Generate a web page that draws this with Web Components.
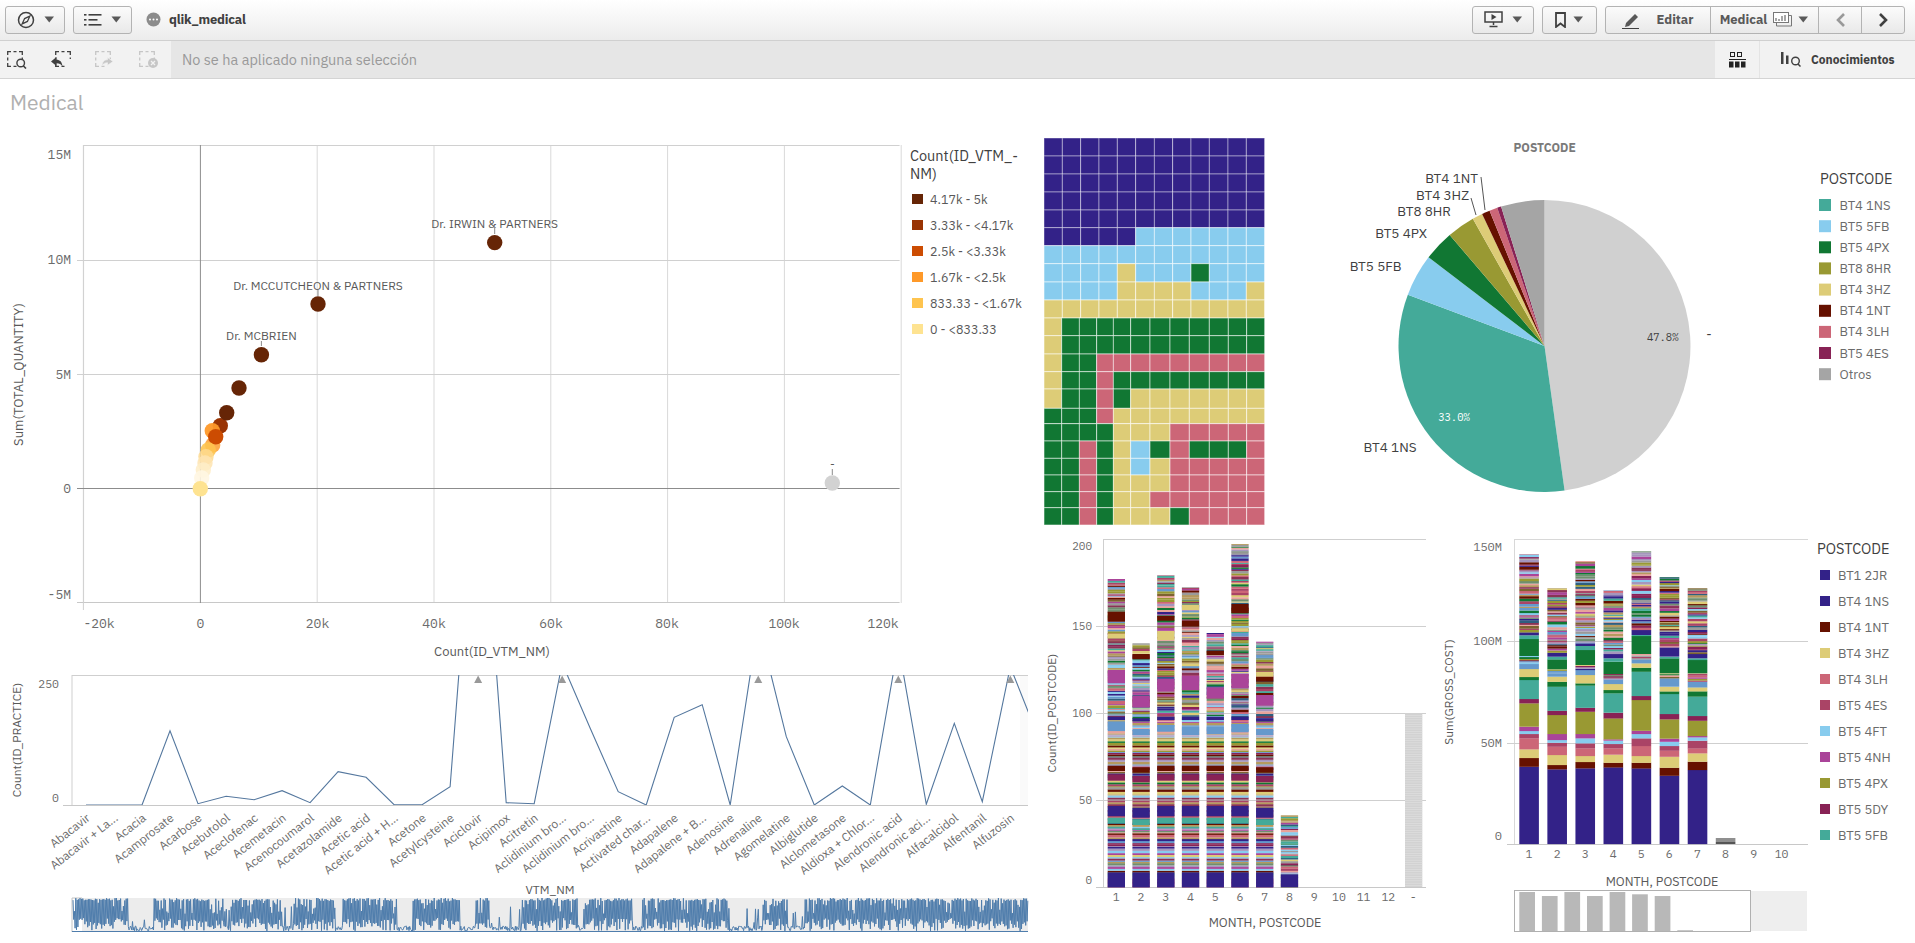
<!DOCTYPE html>
<html lang="es"><head><meta charset="utf-8"><title>Medical</title>
<style>
html,body{margin:0;padding:0;background:#fff;width:1915px;height:943px;overflow:hidden;font-family:"Noto Sans","Liberation Sans",sans-serif}
q-app{display:block;width:1915px;height:943px}
</style></head><body>
<q-app></q-app>
<script>
const C={navy:'#332288',blue:'#6699cc',light:'#88ccee',teal:'#44aa99',green:'#117733',olive:'#999933',khaki:'#ddcc77',dark:'#661100',pink:'#cc6677',crim:'#aa4466',mar:'#882255',mag:'#aa4499'};
const FONT='"IBM Plex Sans","Noto Sans","Liberation Sans",sans-serif';
const NUMCSS=`.n{font-family:"IBM Plex Mono","DejaVu Sans Mono","Liberation Mono",monospace;font-size:11.5px;fill:#6b6b6b}`;
const BASECSS=`:host{display:block}svg{display:block;overflow:visible}text{font-family:${FONT};font-size:13px;fill:#595959;dominant-baseline:central}.t{font-size:13px;fill:#595959}.l{font-size:14.5px;fill:#404040}.i{font-size:13px;fill:#666}${NUMCSS}`;
function rng(seed){let s=seed>>>0;return()=>{s=(s+0x6D2B79F5)>>>0;let t=s;t=Math.imul(t^t>>>15,t|1);t^=t+Math.imul(t^t>>>7,t|61);return((t^t>>>14)>>>0)/4294967296}}
const R=(x,y,w,h,f,e='')=>`<rect x="${x}" y="${y}" width="${w}" height="${h}" fill="${f}" ${e}/>`;
const L=(a,b,c,d,s,w=1)=>`<line x1="${a}" y1="${b}" x2="${c}" y2="${d}" stroke="${s}" stroke-width="${w}"/>`;
const T=(x,y,s,cls='t',a='start',e='')=>`<text x="${x}" y="${y}" class="${cls}" text-anchor="${a}" ${e}>${s}</text>`;
class Base extends HTMLElement{
  connectedCallback(){if(this.shadowRoot)return;this.attachShadow({mode:'open'});this.shadowRoot.innerHTML=this.html()}
}
function svgBox(x,y,w,h,inner){return `<style>${BASECSS}</style><svg xmlns="http://www.w3.org/2000/svg" width="${w}" height="${h}" viewBox="${x} ${y} ${w} ${h}">${inner}</svg>`}

/* ---------- chrome ---------- */
const caret='<svg width="11" height="7" viewBox="0 0 11 7"><path d="M0.5 0.5h9.5L5.25 6.5z" fill="#595959"/></svg>';
class QBtn extends Base{html(){return `<style>:host{display:inline-flex;align-items:center;justify-content:center;gap:var(--g,8px);box-sizing:border-box;height:28px;width:var(--w,60px);border:1px solid #b3b3b3;border-radius:var(--r,3px);background:linear-gradient(#fbfbfb,#e9e9e9);font:bold 13px ${FONT};color:#595959;margin-left:var(--ml,0)}::slotted(svg){display:block}</style><slot></slot>`}}
class QTopbar extends Base{html(){return `<style>:host{display:flex;align-items:center;justify-content:space-between;box-sizing:border-box;height:41px;padding:0 10px 1px 5px;background:linear-gradient(#fff,#ececec);border-bottom:1px solid #d0d0d0}
.g{display:flex;align-items:center}.nm{font:bold 13px ${FONT};color:#404040;margin-left:8px;letter-spacing:-.2px}
.dot{margin-left:14px}.seg{display:flex;margin-left:8px}</style>
<div class="g"><q-btn style="--w:60px"><svg width="20" height="20" viewBox="0 0 20 20"><circle cx="10" cy="10" r="7.5" fill="none" stroke="#404040" stroke-width="1.5"/><path d="M13.8 6.2L11.4 11.4 6.2 13.8 8.6 8.6z" fill="none" stroke="#404040" stroke-width="1.3"/></svg>${caret}</q-btn>
<q-btn style="--w:59px;margin-left:8px"><svg width="19" height="14" viewBox="0 0 19 14"><g fill="#404040"><rect x="0" y="1" width="2.5" height="1.6"/><rect x="0" y="6" width="2.5" height="1.6"/><rect x="0" y="11" width="2.5" height="1.6"/><rect x="4.5" y="1" width="13" height="1.6"/><rect x="4.5" y="6" width="9" height="1.6"/><rect x="4.5" y="11" width="13" height="1.6"/></g></svg>${caret}</q-btn>
<svg class="dot" width="15" height="15" viewBox="0 0 15 15"><circle cx="7.5" cy="7.5" r="7" fill="#8c8c8c"/><g fill="#fff"><circle cx="4" cy="7.5" r="1"/><circle cx="7.5" cy="7.5" r="1"/><circle cx="11" cy="7.5" r="1"/></g></svg><span class="nm">qlik_medical</span></div>
<div class="g"><q-btn style="--w:62px"><svg width="20" height="17" viewBox="0 0 20 17"><rect x="1" y="1" width="17" height="10" fill="none" stroke="#404040" stroke-width="1.5"/><path d="M7.5 3l5 3-5 3z" fill="#404040"/><path d="M9.5 11v3M5.5 15.5h8" stroke="#404040" stroke-width="1.5"/></svg>${caret}</q-btn>
<q-btn style="--w:55px;--g:7px;margin-left:8px"><svg width="11" height="16" viewBox="0 0 11 16"><path d="M1 1h9v14L5.5 11.5 1 15z" fill="none" stroke="#404040" stroke-width="1.8"/></svg>${caret}</q-btn>
<div class="seg"><q-btn style="--w:106px;--g:15px;--r:3px 0 0 3px"><svg width="19" height="18" viewBox="0 0 19 18"><path d="M4 12L13 3l3 3-9 9-4 1z" fill="#595959"/><path d="M0 17.5h17" stroke="#404040"/></svg><span>Editar</span></q-btn>
<q-btn style="--w:109px;--g:6px;--r:0;margin-left:-1px"><span>Medical</span><svg width="19" height="15" viewBox="0 0 19 15"><rect x="0.5" y="0.5" width="15" height="10" fill="#fff" stroke="#777"/><path d="M15.5 3.5h3v10.5h-15v-3.5" fill="none" stroke="#777"/><path d="M3 6v3M6 7v2M9 4v5M12 3v6" stroke="#777" stroke-width="1.3"/></svg>${caret}</q-btn>
<q-btn style="--w:44px;--r:0;margin-left:-1px"><svg width="11" height="16" viewBox="0 0 11 16"><path d="M9 2L3 8l6 6" fill="none" stroke="#999" stroke-width="2.6"/></svg></q-btn>
<q-btn style="--w:44px;--r:0 3px 3px 0;margin-left:-1px"><svg width="11" height="16" viewBox="0 0 11 16"><path d="M2 2l6 6-6 6" fill="none" stroke="#404040" stroke-width="2.6"/></svg></q-btn></div></div>`}}
class QSelbar extends Base{html(){
 const dash=(x,c)=>`<path d="M${x+.7} 4V.7H${x+4}M${x+6.5} .7H${x+9.5}M${x+12} .7H${x+15.3}V4M${x+.7} 6.5V9.5M${x+.7} 12V15.3H${x+4}M${x+6.5} 15.3H${x+9.5}M${x+15.3} 6.5V8" fill="none" stroke="${c}" stroke-width="1.3"/>`;
 return `<style>:host{display:flex;align-items:stretch;box-sizing:border-box;height:38px;background:#f2f2f2;border-bottom:1px solid #d4d4d4}
.ic{display:flex;align-items:center;width:171px;box-sizing:border-box;padding-left:7px;gap:24px}
.msg{flex:1;background:#e6e6e6;display:flex;align-items:center;padding-left:11px;font:14.5px ${FONT};color:#999}
.a{width:44px;display:flex;align-items:center;justify-content:center;border-right:1px solid #e4e4e4}
.b{width:155px;display:flex;align-items:center;padding-left:21px;box-sizing:border-box;gap:9px;font:bold 12px ${FONT};color:#404040}</style>
<div class="ic"><svg width="20" height="18" viewBox="0 0 20 18">${dash(0,'#404040')}<circle cx="13.7" cy="12" r="3.8" fill="#f2f2f2" stroke="#404040" stroke-width="1.4"/><path d="M16.3 14.8L19 17.5" stroke="#404040" stroke-width="1.6"/></svg>
<svg width="20" height="18" viewBox="0 0 20 18">${dash(4,'#404040')}<path d="M0 10.5L5.5 6v2.8c3.5 0 5.5 2 6 6.7-1.5-2.2-3-3.2-6-3.2V15z" fill="#404040"/></svg>
<svg width="20" height="18" viewBox="0 0 20 18">${dash(0,'#c6c6c6')}<path d="M18 10.5L12.5 6.5v2.3c-3 0-5 1.7-5.5 5.7 1.5-2 3-2.8 5.5-2.8v2.6z" fill="#c6c6c6" stroke="#f2f2f2" stroke-width=".6"/></svg>
<svg width="20" height="18" viewBox="0 0 20 18">${dash(0,'#c6c6c6')}<circle cx="14" cy="12" r="5" fill="#c6c6c6"/><path d="M12 10l4 4M16 10l-4 4" stroke="#f2f2f2" stroke-width="1.3"/></svg></div>
<div class="msg">No se ha aplicado ninguna selección</div>
<div class="a"><svg width="17" height="16" viewBox="0 0 17 16"><g fill="none" stroke="#222"><rect x="1.5" y="0.5" width="4" height="4"/><rect x="8.5" y="0.5" width="4" height="4"/></g><rect x="0" y="7" width="17" height="1" fill="#222"/><g fill="#222"><rect x="0" y="9.5" width="4.5" height="6"/><rect x="6" y="9.5" width="4.5" height="6"/><rect x="12" y="9.5" width="4.5" height="6"/></g></svg></div>
<div class="b"><svg width="21" height="15" viewBox="0 0 21 15"><g fill="#404040"><rect x="0" y="0" width="2.5" height="12"/><rect x="5" y="3.5" width="2.5" height="8.5"/></g><circle cx="14.5" cy="9" r="3.8" fill="none" stroke="#404040" stroke-width="1.4"/><path d="M17 12l2.5 2.5" stroke="#404040" stroke-width="1.5"/></svg><span>Conocimientos</span></div>`}}

/* ---------- scatter ---------- */
class QScatter extends Base{html(){
 let s='';
 const X=v=>200.4+v*5.84, Y=v=>488.5-v*22.8;
 [-20,20,40,60,80,100,120].forEach(v=>{s+=L(X(v),145,X(v),603,'#d9d9d9')});
 s+=L(83.4,145.5,899.6,145.5,'#d0d0d0');
 [10,5].forEach(v=>s+=L(77,Y(v),899.6,Y(v),'#d0d0d0'));
 s+=L(77,602.5,899.6,602.5,'#c8c8c8');
 s+=L(83.4,145,83.4,610,'#d0d0d0');
 s+=L(200.4,145,200.4,603,'#8c8c8c');s+=L(77,488.5,899.6,488.5,'#8c8c8c');
 [[15,154],[10,259],[5,374],[0,488],[-5,594]].forEach(([v,y])=>s+=T(71,y,v==0?'0':v+'M','n sc','end'));
 [['-20k',99],['0',200.4],['20k',317.5],['40k',434],['60k',551],['80k',667],['100k',784],['120k',883]].forEach(([t,x])=>s+=T(x,623,t,'n sc','middle'));
 s+=T(492,651.5,'Count(ID_VTM_NM)','t','middle');
 s+=T(18,374.5,'Sum(TOTAL_QUANTITY)','t','middle','transform="rotate(-90 18 374.5)"');
 const c=['#662506','#993404','#cc4c02','#fe9929','#fec44f','#fee391'];
 const disc=(x,y,f,o=1)=>`<circle cx="${x}" cy="${y}" r="7.7" fill="${f}" fill-opacity="${o}"/>`;
 s+=disc(220.3,425.7,c[1])+disc(212.3,430.7,'#fe9929',.95)+disc(212.7,445,'#fda43c',.9)+disc(215.7,436.7,c[2])+disc(208.3,450,'#fec44f',.9);
 s+=disc(206,456.7,'#fed98e',.85)+disc(205,463,'#fee4b0',.85)+disc(203.3,470,'#feedc8',.85)+disc(201.7,478,'#fff6e2',.9);
 s+=disc(226.7,412.7,c[0]);
 [[239,388],[261.4,354.8],[318,304],[494.7,242.6]].forEach(([x,y])=>s+=disc(x,y,c[0]));
 s+=disc(200.3,488.7,'#fee391')+disc(832.3,483,'#d2d2d2');
 [[494.7,223,228,234,'Dr. IRWIN &amp; PARTNERS'],[318,285,290,296,'Dr. MCCUTCHEON &amp; PARTNERS'],[261.4,335,341,346,'Dr. MCBRIEN'],[832.3,463.5,469,475,'-']].forEach(([x,y,a,b,t])=>{s+=T(x,y,t,'lb','middle');s+=L(x,a,x,b,'#8c8c8c')});
 s+=T(910,155,'Count(ID_VTM_-','l');s+=T(910,173,'NM)','l');
 ['4.17k - 5k','3.33k - &lt;4.17k','2.5k - &lt;3.33k','1.67k - &lt;2.5k','833.33 - &lt;1.67k','0 - &lt;833.33'].forEach((t,i)=>{const y=199+i*26;s+=R(912,y-5,11,10,c[i]);s+=T(930,y,t,'ln')});
 return svgBox(0,130,1030,530,`<style>.lb{font-size:12px;fill:#595959}.ln{font-size:12.5px;fill:#595959}text.sc{font-size:13px}</style>`+s)}}

/* ---------- line chart ---------- */
class QLine extends Base{html(){
 const names=['Abacavir','Abacavir + La...','Acacia','Acamprosate','Acarbose','Acebutolol','Aceclofenac','Acemetacin','Acenocoumarol','Acetazolamide','Acetic acid','Acetic acid + H...','Acetone','Acetylcysteine','Aciclovir','Acipimox','Acitretin','Aclidinium bro...','Aclidinium bro...','Acrivastine','Activated char...','Adapalene','Adapalene + B...','Adenosine','Adrenaline','Agomelatine','Albiglutide','Alclometasone','Aldioxa + Chlor...','Alendronic acid','Alendronic aci...','Alfacalcidol','Alfentanil','Alfuzosin'];
 const zy=[435,435,435,212,431,409,419,392,428,335,352,434,434,380,-700,428,431,10,205,395,435,172,134,435,-111,230,435,378,435,-46,433,190,425,20,232];
 const px=i=>86+i*28.010;
 let s=L(72,675.5,1028,675.5,'#cfcfcf')+L(72,675,72,805,'#cfcfcf')+L(63,805.5,1028,805.5,'#c8c8c8');
 s+=R(1020,676,8,129,'#fafafa');
 s+=`<defs><clipPath id="c"><rect x="72" y="675" width="956" height="130"/></clipPath></defs>`;
 s+=`<polyline clip-path="url(#c)" fill="none" stroke="#54779e" stroke-width="1.1" points="${zy.map((y,i)=>px(i).toFixed(1)+','+(660+y/3).toFixed(1)).join(' ')}"/>`;
 [14,17,24,29,33].forEach(i=>{const x=px(i);s+=`<path d="M${x} 675.5l4 7.5h-8z" fill="#999"/>`});
 s+=T(59,683,'250','n','end')+T(59,797,'0','n','end');
 s+=T(16,740,'Count(ID_PRACTICE)','t','middle','transform="rotate(-90 16 740)" style="font-size:12px"');
 names.forEach((n,i)=>{const x=px(i)+2,y=816;s+=T(x,y,n,'xl','end',`transform="rotate(-38 ${x} ${y})"`)});
 s+=T(550,889,'VTM_NM','t','middle','style="font-size:12px"');
 s+=R(72,898,956,34,'#ececec');s+=R(72,898,10,34,'#fff');s+=L(72,898,72,932,'#c4c4c4')+L(72,898,82,898,'#c4c4c4');
 const r=rng(77);let d='';let state=0,run=0,flip=false;
 for(let x=73;x<1028;x+=.7){
   if(run--<=0){state=r()<.68?1:0;run=state?8+r()*34:5+r()*22}
   flip=!flip;
   const v=state?(flip?898+r()*(r()<.7?3:16):918+r()*13):(r()<.14?906+r()*20:926+r()*5);
   d+=(d?'L':'M')+x.toFixed(1)+' '+v.toFixed(1)}
 s+=`<path fill="none" stroke="#4f7dac" stroke-width="1" d="${d}"/>`+L(72,931.5,1028,931.5,'#4f7dac');
 return svgBox(0,660,1030,283,`<style>.xl{font-size:12px;fill:#6b6b6b}</style>`+s)}}

/* ---------- treemap ---------- */
class QTreemap extends Base{html(){
 const c={n:C.navy,l:C.light,k:C.khaki,g:C.green,p:C.pink};
 const col12=[42,97,152,207,262,317,373,428,483,538,594,649,704];
 const low=[42,95,148,200,250,302,360,420,478,538,595,650,704];
 const rows=[
 [24,'nnnnnnnnnnnn'],[78,'nnnnnnnnnnnn'],[132,'nnnnnnnnnnnn'],[186,'nnnnnnnnnnnn'],[240,'nnnnnnnnnnnn'],
 [293,'nnnnnlllllll'],[347,'llllllllllll'],[401,'llllklllglll'],[456,'llllkkkklllk'],[510,'kkkkkkkkkkkk'],
 [564,'kggggggggggg'],[617,'kggggggggggg'],[672,'kggppppppppp'],[725,'kggpgggggggg'],[777,'kggpgkkkkkkk'],[835,'gggpkkkkkkkk'],
 [881,'ggggkkkppppp'],[933,'ggpgklgpgggp'],[985,'ggpgklkppppp'],[1035,'ggpgkkkppppp'],[1085,'ggpgkkpppppp'],[1133,'ggpgkkkgpppp'],[1185,'']];
 let s='';
 rows.slice(0,-1).forEach(([y,str],ri)=>{const h=(rows[ri+1][0]-y)/3;const cols=ri<10?col12:low;for(let i=0;i<12;i++){const x=cols[i],w=cols[i+1]-x;
   s+=R((1030+x/3).toFixed(1),(130+y/3).toFixed(1),(w/3).toFixed(1),h.toFixed(1),c[str[i]],`stroke="#fff" stroke-opacity="${str[i]=='n'?.45:.6}" stroke-width=".9"`)}});
 return svgBox(1030,130,270,400,s)}}

/* ---------- pie ---------- */
class QPie extends Base{html(){
 const cx=1544.5,cy=346,r=146;
 const p=a=>{const t=a*Math.PI/180;return (cx+r*Math.sin(t)).toFixed(2)+' '+(cy-r*Math.cos(t)).toFixed(2)};
 const sl=[[0,172.1,'#d0d0d0'],[172.1,290.6,C.teal],[290.6,307.4,C.light],[307.4,319.5,C.green],[319.5,330.6,C.olive],[330.6,334.7,C.khaki],[334.7,337.9,C.dark],[337.9,341.1,C.pink],[341.1,342.7,C.mar],[342.7,360,'#a5a5a5']];
 let s='';
 sl.forEach(([a,b,f])=>{s+=`<path d="M${cx} ${cy}L${p(a)}A${r} ${r} 0 ${b-a>180?1:0} 1 ${p(b)}Z" fill="${f}"/>`});
 s+=T(1544.6,147,'POSTCODE','pt','middle');
 [['BT4 1NT',1478,178],['BT4 3HZ',1469,195],['BT8 8HR',1451,211],['BT5 4PX',1427,232.5],['BT5 5FB',1401.6,266],['BT4 1NS',1416.6,447]].forEach(([t,x,y])=>s+=T(x,y,t,'pl','end'));
 s+=T(1709,334,'-','pl','middle');
 s+=T(1662.7,337,'47.8%','n pv','middle')+T(1454,417,'33.0%','n pv','middle','style="fill:#fff"');
 s+=L(1481,177,1485,210,'#555')+L(1471,198,1476,215,'#555');
 s+=T(1820,178,'POSTCODE','l');
 [['BT4 1NS',C.teal],['BT5 5FB',C.light],['BT5 4PX',C.green],['BT8 8HR',C.olive],['BT4 3HZ',C.khaki],['BT4 1NT',C.dark],['BT4 3LH',C.pink],['BT5 4ES',C.mar],['Otros','#a5a5a5']].forEach(([t,f],i)=>{const y=205+i*21.15;s+=R(1819,(y-6).toFixed(1),12,12,f);s+=T(1839.5,y.toFixed(1),t,'li')});
 return svgBox(1300,130,615,400,`<style>.pt{font-size:12px;font-weight:bold;fill:#7a7a7a}.pl{font-size:13.5px;fill:#404040}text.pv{font-size:10.5px;fill:#404040}.li{font-size:13px;fill:#6b6b6b}</style>`+s)}}

/* ---------- stacked bars ---------- */
const STRIPE=[C.navy,C.blue,C.light,C.teal,C.green,C.olive,C.khaki,C.dark,C.pink,C.crim,C.mar,C.mag,'#b59a5e','#9a9a9a','#e8a39b','#6f8f6f','#a596bd','#7d6330','#2f5f7f','#8a3355'];
function stripes(x,w,yBottom,yTop,seed,minH,maxH){const r=rng(seed);let y=yBottom,o='';while(y>yTop){const h=Math.min(minH+r()*(maxH-minH),y-yTop);const f=STRIPE[Math.floor(r()*STRIPE.length)];o+=R(x,(y-h).toFixed(1),w,(h+.1).toFixed(1),f);y-=h}return o}
class QBarsCount extends Base{html(){
 const Z=y=>530+y/3;
 let s=L(1103,539.5,1426,539.5,'#cfcfcf')+L(1103.5,539,1103.5,887,'#cfcfcf')+L(1096,887.5,1426,887.5,'#c8c8c8');
 [626,713,800].forEach(y=>s+=L(1096,y+.5,1426,y+.5,'#cfcfcf'));
 [['200',546],['150',626],['100',713],['50',800],['0',880]].forEach(([t,y])=>s+=T(1092,y,t,'n','end','style="font-size:11px"'));
 const cfg=[[147,[420,460],[575,600],[245,275],[310,325]],[340,[497,533],[600,615],[372,388],null],[136,[447,485],[585,605],[258,272],[303,330]],[172,[437,480],[590,615],[272,290],[225,240]],[309,[472,505],[590,612],[362,375],null],[42,[432,475],[582,607],[222,250],[295,305]],[335,[495,527],[600,615],[440,455],[425,440]]];
 const lowFeat=(off)=>[[1027,1072,C.navy],[863+off,880+off,C.teal],[890+off,895+off,C.teal],[828+off,858+off,C.navy],[733+off,752+off,C.mar],[707+off,723+off,C.dark],[560+off,570+off,C.navy]];
 cfg.forEach((c,i)=>{const x=1107.7+i*24.73,w=17.3,off=(i==1||i==6)?5:0;
   const bot=Z(1072),mid=Z(575);
   s+=stripes(x,w,bot,mid,11,.8,2.6);
   s+=stripes(x,w,mid,Z(c[0]),101+i*17,.8,2.6);
   lowFeat(off).forEach(([a,b,f])=>s+=R(x,Z(a).toFixed(1),w,((b-a)/3).toFixed(1),f));
   s+=R(x,Z(c[2][0]).toFixed(1),w,((c[2][1]-c[2][0])/3).toFixed(1),C.blue);
   s+=R(x,Z(c[1][0]).toFixed(1),w,((c[1][1]-c[1][0])/3).toFixed(1),C.mag);
   s+=R(x,Z(c[3][0]).toFixed(1),w,((c[3][1]-c[3][0])/3).toFixed(1),C.dark);
   if(c[4])s+=R(x,Z(c[4][0]).toFixed(1),w,((c[4][1]-c[4][0])/3).toFixed(1),C.khaki);
 });
 {const x=1107.7+7*24.73;s+=stripes(x,17.3,Z(1072),Z(856),301,.8,2.6);s+=R(x,Z(1033),17.3,13,C.navy)}
 {const x=1405;s+=R(x,713,17.3,174,'#d2d2d2');for(let y=715;y<887;y+=2.3)s+=R(x,y.toFixed(1),17.3,.5,'#e4e4e4')}
 ['1','2','3','4','5','6','7','8','9','10','11','12','-'].forEach((t,i)=>s+=T((1116.3+i*24.73).toFixed(1),896,t,'n','middle'));
 s+=T(1265,922,'MONTH, POSTCODE','t','middle','style="font-size:12.5px"');
 s+=T(1051,713,'Count(ID_POSTCODE)','t','middle','transform="rotate(-90 1051 713)" style="font-size:12px"');
 s+=T(1448,692,'Sum(GROSS_COST)','t','middle','transform="rotate(-90 1448 692)" style="font-size:12px"');
 return svgBox(1030,530,440,413,s)}}
class QBarsCost extends Base{html(){
 const Z=y=>530+y/3;
 let s=L(1514,539.5,1808,539.5,'#d8d8d8')+L(1514.5,539,1514.5,844,'#d8d8d8')+L(1507,844.5,1808,844.5,'#c8c8c8');
 [641,743].forEach(y=>s+=L(1507,y+.5,1808,y+.5,'#cfcfcf'));
 [['150M',546],['100M',640],['50M',742],['0',835]].forEach(([t,y])=>s+=T(1502,y,t,'n','end','style="font-size:12px"'));
 const d=[[710,684,658,625,612,603,590,520,507,450,441,417,402,380,378,327,316,307,72],
 [718,705,675,650,638,630,612,555,542,470,455,440,430,426,418,388,380,368,175],
 [715,696,678,655,640,625,612,545,533,467,460,435,420,410,405,360,348,340,93],
 [712,698,674,655,642,632,628,565,548,490,480,462,448,436,432,395,385,372,180],
 [715,698,678,648,625,612,602,510,498,425,413,400,388,384,372,318,315,300,64],
 [737,713,680,662,648,635,626,568,552,492,484,470,445,437,430,385,380,352,141],
 [720,695,670,655,632,622,618,572,558,500,484,472,455,435,430,390,385,372,175]];
 const seq=[C.navy,C.dark,C.khaki,C.pink,C.crim,C.light,C.mag,C.olive,C.mar,C.teal,C.green,C.khaki,C.blue];
 d.forEach((a,i)=>{const x=1519.3+i*28.07,w=19.6;let prev=942;
   seq.forEach((f,k)=>{s+=R(x,Z(a[k]).toFixed(1),w,((prev-a[k])/3+.1).toFixed(1),f);prev=a[k]});
   s+=stripes(x,w,Z(prev),Z(a[14]),50+i,1,2);
   s+=R(x,Z(a[15]).toFixed(1),w,((a[14]-a[15])/3).toFixed(1),C.green);
   s+=R(x,Z(a[16]).toFixed(1),w,((a[15]-a[16])/3+.1).toFixed(1),C.teal);
   s+=R(x,Z(a[17]).toFixed(1),w,((a[16]-a[17])/3).toFixed(1),C.navy);
   s+=stripes(x,w,Z(a[17]),Z(a[18]),70+i*13,.8,2.8);
 });
 {const x=1519.3+7*28.07;s+=R(x,838,19.6,4,'#8f8f8f')+R(x,842,19.6,2,'#555')}
 for(let i=0;i<10;i++)s+=T((1529+i*28.07).toFixed(1),853,String(i+1),'n','middle');
 s+=T(1662,881,'MONTH, POSTCODE','t','middle','style="font-size:12.5px"');
 s+=T(1817,548,'POSTCODE','l');
 [['BT1 2JR',C.navy],['BT4 1NS',C.navy],['BT4 1NT',C.dark],['BT4 3HZ',C.khaki],['BT4 3LH',C.pink],['BT5 4ES',C.crim],['BT5 4FT',C.light],['BT5 4NH',C.mag],['BT5 4PX',C.olive],['BT5 5DY',C.mar],['BT5 5FB',C.teal]].forEach(([t,f],i)=>{const y=575+i*26;s+=R(1820,y-5,10,10,f);s+=T(1838,y,t,'li')});
 s+=R(1750,891,57,40,'#eee');
 s+=`<rect x="1514.5" y="890.5" width="236" height="41" fill="#fff" stroke="#b0b0b0"/>`;
 [1086,1098,1086,1098,1086,1093,1098].forEach((t,i)=>{s+=R((1519.3+i*22.57).toFixed(1),Z(t).toFixed(1),15.7,(931-Z(t)).toFixed(1),'#b8b8b8')});
 s+=R(1519.3+7*22.57,930,15.7,1,'#c8c8c8');
 return svgBox(1470,530,445,413,`<style>.li{font-size:13px;fill:#6b6b6b}</style>`+s)}}

/* ---------- sheet ---------- */
class QSheet extends Base{html(){return `<style>:host{display:block;height:864px}
.title{height:51px;box-sizing:border-box;padding:9px 0 0 10px;font:21px ${FONT};color:#b0b0b0;line-height:28px}
.grid{display:grid;grid-template-columns:1030px 270px 170px 445px;grid-template-rows:400px 130px 283px}
q-scatter{grid-column:1;grid-row:1/3}q-line{grid-column:1;grid-row:3}
q-treemap{grid-column:2;grid-row:1}q-pie{grid-column:3/5;grid-row:1}
q-bars-count{grid-column:2/4;grid-row:2/4}q-bars-cost{grid-column:4;grid-row:2/4}</style>
<div class="title">Medical</div><div class="grid"><q-scatter></q-scatter><q-line></q-line><q-treemap></q-treemap><q-pie></q-pie><q-bars-count></q-bars-count><q-bars-cost></q-bars-cost></div>`}}
class QApp extends Base{html(){return `<style>:host{display:block}</style><q-topbar></q-topbar><q-selbar></q-selbar><q-sheet></q-sheet>`}}
customElements.define('q-btn',QBtn);customElements.define('q-topbar',QTopbar);customElements.define('q-selbar',QSelbar);
customElements.define('q-scatter',QScatter);customElements.define('q-line',QLine);customElements.define('q-treemap',QTreemap);customElements.define('q-pie',QPie);
customElements.define('q-bars-count',QBarsCount);customElements.define('q-bars-cost',QBarsCost);customElements.define('q-sheet',QSheet);customElements.define('q-app',QApp);
</script></body></html>
